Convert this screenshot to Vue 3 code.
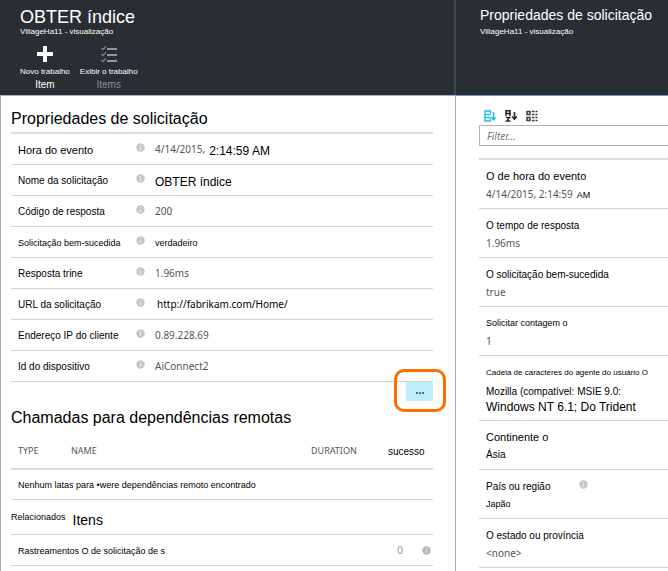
<script setup>
import { ref } from 'vue'

const filter = ref('')

const details = [
  { label: 'Hora do evento', size: 'lg', parts: [{ text: '4/14/2015,', kind: 'soft' }, { text: '2:14:59 AM', kind: 'big' }] },
  { label: 'Nome da solicitação', size: 'md', parts: [{ text: 'OBTER índice', kind: 'big' }] },
  { label: 'Código de resposta', size: 'md', parts: [{ text: '200', kind: 'soft' }] },
  { label: 'Solicitação bem-sucedida', size: 'sm', parts: [{ text: 'verdadeiro', kind: 'small' }] },
  { label: 'Resposta trine', size: 'md', parts: [{ text: '1.96ms', kind: 'soft' }] },
  { label: 'URL da solicitação', size: 'md', parts: [{ text: 'http://fabrikam.com/Home/', kind: 'url' }] },
  { label: 'Endereço IP do cliente', size: 'md', parts: [{ text: '0.89.228.69', kind: 'soft' }] },
  { label: 'Id do dispositivo', size: 'md', parts: [{ text: 'AiConnect2', kind: 'soft' }] }
]

const properties = [
  { label: 'O de hora do evento', size: 'lg', value: '4/14/2015, 2:14:59', kind: 'soft', suffix: 'AM' },
  { label: 'O tempo de resposta', size: 'md', value: '1.96ms', kind: 'soft' },
  { label: 'O solicitação bem-sucedida', size: 'md', value: 'true', kind: 'soft' },
  { label: 'Solicitar contagem o', size: 'sm', value: '1', kind: 'soft' },
  { label: 'Cadeia de caracteres do agente do usuário O', size: 'xs', value: 'Mozilla (compatível: MSIE 9.0:', kind: 'plain', extra: 'Windows NT 6.1; Do Trident' },
  { label: 'Continente o', size: 'lg', value: 'Ásia', kind: 'plain' },
  { label: 'País ou região', size: 'md', value: 'Japão', kind: 'small', info: true },
  { label: 'O estado ou província', size: 'md', value: '<none>', kind: 'soft' }
]
</script>

<template>
  <main class="portal">
    <section class="blade main-blade">
      <header class="head">
        <h1>OBTER índice</h1>
        <p class="sub">VillageHa11 - visualização</p>
        <div class="commands">
          <button type="button" class="command">
            <svg width="16" height="16" viewBox="0 0 16 16" aria-hidden="true">
              <path d="M8 0v16M0 8h16" stroke="#fff" stroke-width="4" />
            </svg>
            <span class="cmd-top">Novo trabalho</span>
            <span class="cmd-bottom">Item</span>
          </button>
          <button type="button" class="command muted">
            <svg width="16" height="16" viewBox="0 0 16 16" aria-hidden="true" fill="none">
              <path d="M6 3h10M6 9h10M6 15h10" stroke="#92969a" stroke-width="2" />
              <path d="M0.500 2l1.500 1.500L5 0.500M0.500 8l1.500 1.500L5 6.500M0.500 14l1.500 1.500L5 12.500" stroke="#858a8e" stroke-width="1.200" />
            </svg>
            <span class="cmd-top">Exibir o trabalho</span>
            <span class="cmd-bottom">Items</span>
          </button>
        </div>
      </header>

      <div class="body">
        <h2>Propriedades de solicitação</h2>
        <dl class="details">
          <div v-for="row in details" :key="row.label" class="detail">
            <dt :class="row.size">{{ row.label }}</dt>
            <dd>
              <svg class="info" width="9" height="9" viewBox="0 0 9 9" aria-hidden="true">
                <circle cx="4.500" cy="4.500" r="4.200" fill="#c6c6c6" />
                <path d="M4.500 2v1M4.500 4v3" stroke="#ededed" stroke-width="1.200" />
              </svg>
              <span v-for="part in row.parts" :key="part.text" :class="part.kind">{{ part.text }}</span>
            </dd>
          </div>
        </dl>
        <div class="more-bar">
          <button type="button" class="more" aria-label="...">
            <svg width="8" height="2" viewBox="0 0 8 2" aria-hidden="true">
              <path d="M0 0h2v2h-2zM3 0h2v2h-2zM6 0h2v2h-2z" fill="#52717a" />
            </svg>
          </button>
          <span class="callout"></span>
        </div>

        <h2 class="remote">Chamadas para dependências remotas</h2>
        <table>
          <thead>
            <tr>
              <th class="c-type">TYPE</th>
              <th>NAME</th>
              <th class="c-duration">DURATION</th>
              <th class="c-success">sucesso</th>
            </tr>
          </thead>
          <tbody>
            <tr>
              <td colspan="4">Nenhum latas para •were dependências remoto encontrado</td>
            </tr>
          </tbody>
        </table>

        <h2 class="related"><span class="related-small">Relacionados</span><span>Itens</span></h2>
        <div class="trace">
          <span class="trace-label">Rastreamentos O de solicitação de s</span>
          <span class="count">0</span>
          <svg class="info" width="9" height="9" viewBox="0 0 9 9" aria-hidden="true">
            <circle cx="4.500" cy="4.500" r="4.200" fill="#b8b8b8" />
            <path d="M4.500 2v1M4.500 4v3" stroke="#ededed" stroke-width="1.200" />
          </svg>
        </div>
      </div>
    </section>

    <section class="blade side-blade">
      <header class="head side-head">
        <h1>Propriedades de solicitação</h1>
        <p class="sub">VillageHa11 - visualização</p>
      </header>
      <div class="side-body">
        <div class="tools">
          <button type="button" aria-label="Agrupar">
            <svg width="12" height="12" viewBox="0 0 12 12" fill="none" stroke="#1fbdf2">
              <path d="M6.500 3.500v-2.500h-5.500v10h5.500v-2.500M1 4.500h5.500M1 7.500h5.500" stroke-width="1.400" />
              <path d="M9.500 2v8M7.300 7.300l2.200 2.500 2.200-2.500" stroke-width="1.500" />
            </svg>
          </button>
          <button type="button" aria-label="Ordenar">
            <svg width="12" height="12" viewBox="0 0 12 12" fill="none" stroke="#1d2429">
              <path d="M1 5.800v-5h4v5M1 3.500h4" stroke-width="1.600" />
              <path d="M1 7.500h3.800l-3.300 3.500h3.800" stroke-width="1.300" />
              <path d="M9.500 2v7M7.200 6.500l2.300 2.500 2.300-2.500" stroke-width="1.600" />
            </svg>
          </button>
          <button type="button" aria-label="Categorias">
            <svg width="12" height="12" viewBox="0 0 12 12" fill="none" stroke="#363d42">
              <path d="M1 1.500h3v3h-3zM1 7.500h3v3h-3z" stroke-width="1.500" />
              <path d="M6 1.500h2.500M9.500 1.500h2M6 4.500h2.500M9.500 4.500h2M6 7.500h2.500M9.500 7.500h2M6 10.500h2.500M9.500 10.500h2" stroke-width="1.500" />
            </svg>
          </button>
        </div>
        <input v-model="filter" type="text" placeholder="Filter..." aria-label="Filter..." />
        <dl class="props">
          <div v-for="p in properties" :key="p.label" class="prop">
            <dt :class="p.size">
              {{ p.label }}
              <svg v-if="p.info" class="info prop-info" width="9" height="9" viewBox="0 0 9 9" aria-hidden="true">
                <circle cx="4.500" cy="4.500" r="4.200" fill="#c6c6c6" />
                <path d="M4.500 2v1M4.500 4v3" stroke="#ededed" stroke-width="1.200" />
              </svg>
            </dt>
            <dd :class="p.kind">{{ p.value }}<span v-if="p.suffix" class="suffix">{{ p.suffix }}</span></dd>
            <dd v-if="p.extra" class="extra">{{ p.extra }}</dd>
          </div>
        </dl>
      </div>
    </section>
  </main>
</template>

<style>
body {
  margin: 0;
  background: #fff;
}
</style>

<style scoped>
.portal {
  display: grid;
  grid-template-columns: 455fr 213fr;
  min-height: 100vh;
  font-family: "Liberation Sans", Arial, sans-serif;
  color: #000;
  white-space: nowrap;
  overflow: hidden;
}
h1, h2, p, dl, dd { margin: 0; font-weight: 400; }
button { font-family: inherit; border: 0; padding: 0; background: none; }
.blade {
  display: flex;
  flex-direction: column;
  min-width: 0;
}
.head {
  box-sizing: border-box;
  height: 95px;
  padding: 7px 20px 0;
  background: #292e32;
  color: #fff;
}
.head h1 { font-size: 18px; line-height: 20px; }
.sub { font-size: 8px; line-height: 10px; }
.main-blade .head { border-right: 1px solid #40464a; }
.side-head {
  padding: 7px 0 0 24px;
  border-left: 1px solid #40464a;
}
.side-head h1 { font-size: 14px; line-height: 16px; }
.side-head .sub { margin-top: 4px; }

.commands { display: flex; gap: 10px; margin-top: 4px; }
.command {
  display: flex;
  flex-direction: column;
  align-items: center;
  padding-top: 5px;
  color: #fff;
}
.cmd-top { margin-top: 5px; font-size: 8px; line-height: 10px; }
.cmd-bottom { margin-top: 1px; font-size: 10px; line-height: 14px; }
.muted { background: #2a2d35; }
.muted .cmd-bottom { color: #8b8f93; }

.body {
  flex: 1;
  padding: 0 22px 0 10px;
  border-left: 1px solid #a9adb3;
  border-top: 1px solid #a3b1c6;
}
h2 { font-size: 16px; line-height: 20px; }
.body h2:first-child { padding: 13px 0 3px; }
.details { border-top: 2px solid #dedede; }
.detail {
  box-sizing: border-box;
  display: grid;
  grid-template-columns: 118px 1fr;
  align-items: center;
  height: 31px;
  padding: 1px 0 0 7px;
  border-bottom: 1px solid #d3d3d3;
}
.detail dd { display: flex; align-items: center; }
.detail .info { margin: 0 10px 4px 0; }
.lg { font-size: 11px; }
.md { font-size: 10px; }
.sm { font-size: 9px; }
.xs { font-size: 8px; }
.soft {
  font-family: "Noto Sans", sans-serif;
  font-size: 10px;
  line-height: 14px;
  color: #555;
}
.detail .soft { padding-bottom: 2px; }
.big { font-size: 12px; line-height: 14px; padding-top: 2px; }
.soft + .big { margin-left: 4px; }
.url {
  font-family: "Noto Sans", sans-serif;
  font-size: 10px;
  line-height: 14px;
  padding: 0 0 2px 2px;
}
.small { font-size: 9px; }
.plain { font-size: 10px; }

.more-bar {
  position: relative;
  display: flex;
  justify-content: flex-end;
}
.more {
  display: flex;
  align-items: center;
  justify-content: center;
  width: 27px;
  height: 19px;
  padding-top: 2px;
  background: #bdeefa;
}
.callout {
  position: absolute;
  top: -13px;
  right: -13px;
  box-sizing: border-box;
  width: 52px;
  height: 43px;
  border: 3px solid #ff6d00;
  border-radius: 10px;
  pointer-events: none;
}
.remote { padding: 7px 0 4px; }
table {
  width: 100%;
  border-collapse: collapse;
  table-layout: fixed;
  font-size: 9px;
}
th {
  height: 36px;
  padding: 0;
  text-align: left;
  font-family: "Noto Sans", sans-serif;
  font-size: 9px;
  font-weight: 400;
  color: #555;
  border-bottom: 2px solid #dcdcdc;
}
.c-type { width: 53px; padding-left: 7px; }
.c-duration { width: 77px; }
.c-success {
  width: 45px;
  height: 33px;
  padding-top: 3px;
  font-family: inherit;
  font-size: 10px;
  color: #000;
}
td { height: 29px; padding: 0 0 0 7px; border-bottom: 1px solid #d3d3d3; }
.related {
  display: flex;
  gap: 7px;
  align-items: center;
  height: 34px;
  font-size: 14px;
  border-bottom: 1px solid #d3d3d3;
}
.related span:last-child { padding-top: 6px; }
.related-small { font-size: 9px; }
.trace {
  display: flex;
  align-items: center;
  height: 30px;
  padding: 0 2px 0 7px;
  border-bottom: 1px solid #d3d3d3;
  font-size: 9px;
}
.trace-label { flex: 1; padding-top: 2px; }
.count {
  font-family: "Noto Sans", sans-serif;
  font-size: 10px;
  color: #999;
  margin-right: 19px;
}

.side-body {
  flex: 1;
  padding: 14px 0 0 23px;
  border-left: 1px solid #8eaae0;
  border-top: 1px solid #6f95d6;
}
.tools { display: flex; gap: 9px; padding-left: 5px; height: 15px; }
.tools button { display: flex; }
input {
  display: block;
  box-sizing: border-box;
  width: 100%;
  height: 21px;
  padding: 0 7px;
  border: 1px solid #b2b2b2;
  border-right: 0;
  border-radius: 0;
  font: italic 10px "Noto Sans", sans-serif;
  background: #fff;
  outline: 0;
}
input::placeholder { color: #777; opacity: 1; }
.props { margin-top: 12px; border-top: 2px solid #dcdcdc; }
.prop {
  padding: 8px 0 5px 7px;
  border-bottom: 1px solid #d3d3d3;
}
.prop dt { display: flex; line-height: 17px; }
.prop dd { line-height: 18px; }
.prop-info { margin: 2px 0 0 28px; }
.suffix {
  margin-left: 4px;
  font: 9px "Liberation Sans", Arial, sans-serif;
  color: #000;
}
.prop dt.xs + dd { padding-top: 2px; }
.prop .extra { font-size: 12px; line-height: 16px; margin-top: -2px; }
</style>
